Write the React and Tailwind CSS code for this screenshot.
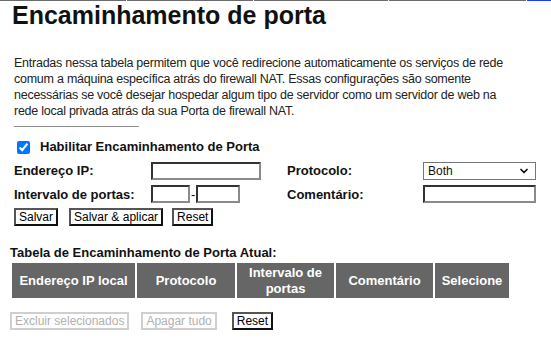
import React from 'react';
import { ChevronDown } from 'lucide-react';

// top tab strip remnants
const segments = [
  { w: 'w-[126px]', c: 'bg-[#6b6b6b]' },
  { w: 'w-[126px]', c: 'bg-[#6b6b6b]' },
  { w: 'w-[134px]', c: 'bg-[#6b6b6b]' },
  { w: 'w-[137px]', c: 'bg-[#6b6b6b]' },
  { w: 'flex-1', c: 'bg-[#1f3df5]' },
];

const btn = 'h-[18px] px-[3px] text-[12px] leading-[14px] bg-white border-2 border-t-[#555] border-l-[#555] border-r-[#111] border-b-[#111] text-black';
const btnOff = 'h-[18px] px-[3px] text-[12px] leading-[14px] bg-white border-2 border-[#cfcfcf] text-[#b0b0b0]';
const field = 'h-[18px] bg-white border-2 border-t-[#333] border-l-[#333] border-r-[#8a8a8a] border-b-[#8a8a8a] outline-none';

const headers = [
  { label: 'Endereço IP local', w: 'w-[123px]' },
  { label: 'Protocolo', w: 'w-[98px]' },
  { label: 'Intervalo de portas', w: 'w-[97px]' },
  { label: 'Comentário', w: 'w-[97px]' },
  { label: 'Selecione', w: 'w-[74px]' },
];

const intro = [
  'Entradas nessa tabela permitem que você redirecione automaticamente os serviços de rede',
  'comum a máquina específica atrás do firewall NAT. Essas configurações são somente',
  'necessárias se você desejar hospedar algum tipo de servidor como um servidor de web na',
  'rede local privada atrás da sua Porta de firewall NAT.',
];

export default function App() {
  return (
    <div className="w-[551px] h-[346px] overflow-hidden bg-white text-[#111] font-['Liberation_Sans',Arial,sans-serif]">
      <div className="flex gap-px h-px">
        {segments.map((s, i) => (
          <div key={i} className={`${s.w} ${s.c} h-px`} />
        ))}
      </div>

      <h1 className="ml-[12px] text-[25px] font-bold leading-[28px]">Encaminhamento de porta</h1>

      <p className="ml-[14px] mt-[26px] text-[12.5px] tracking-[-0.25px] leading-4 text-[#222] whitespace-nowrap">
        {intro.map((line, i) => (
          <span key={i} className="block">{line}</span>
        ))}
      </p>

      <div className="ml-[14px] mt-[7px] w-[125px] border-t border-[#8c8c8c]" />

      <form className="ml-[14px] mt-[11px] text-[13px] font-bold">
        <label className="flex items-center h-[18px] ml-[3px] gap-[10px]">
          <input type="checkbox" defaultChecked className="w-[13px] h-[13px] m-0 accent-[#0075ff]" />
          <span>Habilitar Encaminhamento de Porta</span>
        </label>

        <div className="mt-[5px] grid grid-cols-[137px_136px_136px_auto] gap-y-[4px] items-center">
          <span>Endereço IP:</span>
          <input className={`${field} w-[110px]`} />
          <span>Protocolo:</span>
          <div className="relative w-[113px] h-[18px] border border-[#767676] bg-white font-normal text-[12px] leading-[16px] pl-[4px]">
            Both
            <ChevronDown size={12} strokeWidth={3.5} className="absolute right-[5px] top-[2px]" />
          </div>

          <span>Intervalo de portas:</span>
          <div className="flex items-center">
            <input className={`${field} w-[39px]`} />
            <span className="font-normal px-[1px]">-</span>
            <input className={`${field} w-[44px]`} />
          </div>
          <span>Comentário:</span>
          <input className={`${field} w-[113px]`} />
        </div>

        <div className="mt-[4px] flex gap-[9px] font-normal">
          <button type="button" className={btn}>Salvar</button>
          <button type="button" className={`${btn} ml-[2px]`}>Salvar &amp; aplicar</button>
          <button type="button" className={btn}>Reset</button>
        </div>
      </form>

      <div className="ml-[10px] mt-[19px] text-[13px] font-bold leading-4">Tabela de Encaminhamento de Porta Atual:</div>

      <table className="ml-[10px] border-separate border-spacing-[2px] text-[13px] font-bold text-white">
        <thead>
          <tr>
            {headers.map((h) => (
              <th key={h.label} className={`${h.w} h-[35px] bg-[#666] px-[3px] leading-[16px] text-center align-middle`}>
                {h.label}
              </th>
            ))}
          </tr>
        </thead>
      </table>

      <div className="ml-[10px] mt-[12px] flex gap-[12px]">
        <button type="button" disabled className={btnOff}>Excluir selecionados</button>
        <button type="button" disabled className={btnOff}>Apagar tudo</button>
        <button type="button" className={`${btn} ml-[3px]`}>Reset</button>
      </div>
    </div>
  );
}
